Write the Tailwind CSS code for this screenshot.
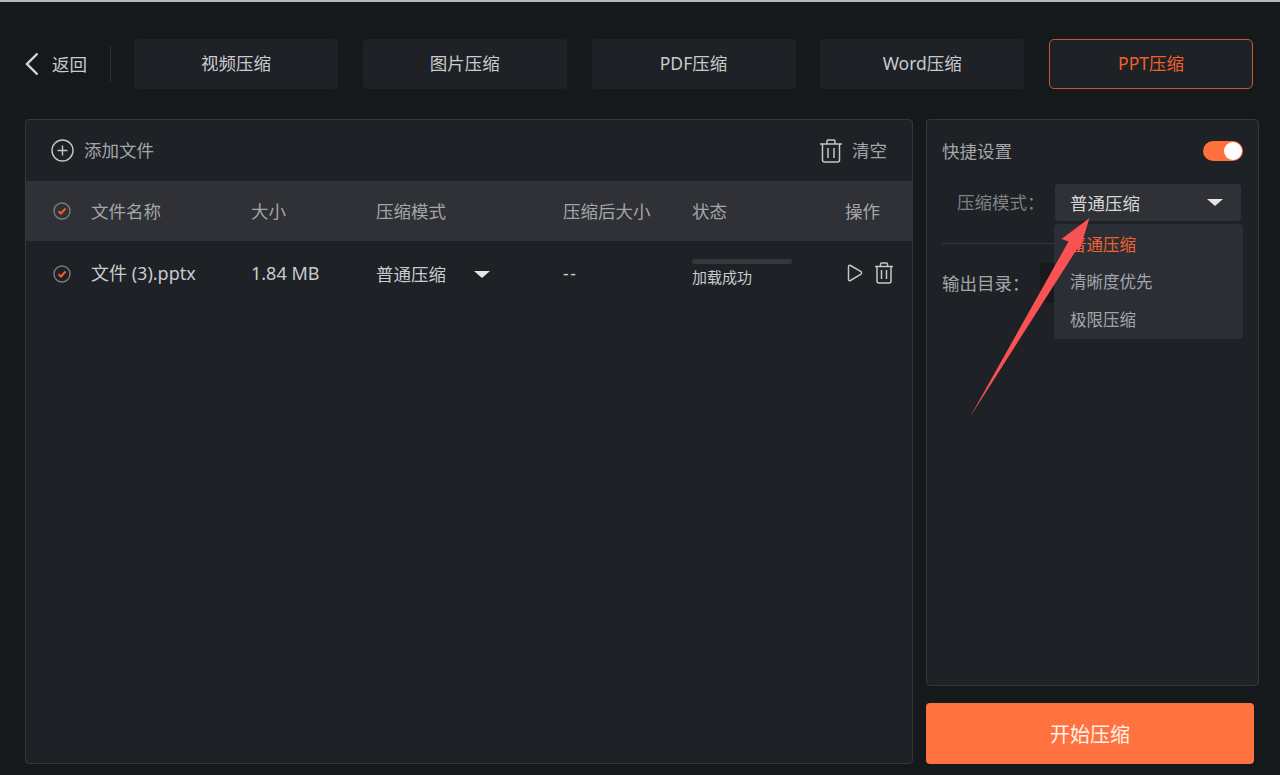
<!DOCTYPE html>
<html lang="zh-CN">
<head>
    <meta charset="UTF-8">
    <meta name="viewport" content="width=device-width, initial-scale=1.0">
    <title>PPT压缩</title>
    <script src="https://cdn.jsdelivr.net/npm/@tailwindcss/browser@4"></script>
</head>

<body class="bg-[#16191c]">
    <div class="relative w-[1280px] h-[775px] overflow-hidden border-t-2 border-[#b9b9b9] font-['Noto_Sans','Noto_Sans_CJK_SC',sans-serif] text-[17.5px] leading-6 text-[#c9cbce]">
        <!-- top tabs -->
        <div class="flex items-center pt-[37px] pl-[25px] h-[87px]">
            <div class="flex items-center w-[86px] h-[36px] border-r border-[#2d3034] mr-[23px]">
                <svg class="w-[14px] h-[24px] mr-[13px]" viewBox="0 0 14 24" fill="none" stroke="#d6d7d9" stroke-width="2.400"><path d="M12.500 1.500 2 12l10.500 10.500"/></svg>
                <span class="-mt-px">返回</span>
            </div>
            <div class="flex gap-[24.75px]">
                <div class="w-[204px] h-[50px] pb-[2px] rounded bg-[#1e2125] flex items-center justify-center">视频压缩</div>
                <div class="w-[204px] h-[50px] pb-[2px] rounded bg-[#1e2125] flex items-center justify-center">图片压缩</div>
                <div class="w-[204px] h-[50px] pb-[2px] rounded bg-[#1e2125] flex items-center justify-center">PDF压缩</div>
                <div class="w-[204px] h-[50px] pb-[2px] rounded bg-[#1e2125] flex items-center justify-center">Word压缩</div>
                <div class="w-[204px] h-[50px] pb-[2px] rounded-[5px] bg-[#1e2125] border border-[#c9582f] text-[#f0602c] flex items-center justify-center">PPT压缩</div>
            </div>
        </div>

        <div class="flex gap-[13px] pl-[25px] pt-[30px]">
            <!-- file list -->
            <div class="w-[888px] h-[645px] rounded border border-[#33363a] bg-[#1e2125]">
                <div class="flex items-center justify-between h-[61px] pl-[25px] pr-[25px]">
                    <div class="flex items-center gap-[10px] text-[#a3a6a9]">
                        <svg class="w-[23px] h-[23px]" viewBox="0 0 23 23" fill="none" stroke="#c4c6c8" stroke-width="1.400"><circle cx="11.500" cy="11.500" r="10.500"/><path d="M11.500 6.500v10M6.500 11.500h10"/></svg>
                        <span class="-mt-[2px]">添加文件</span>
                    </div>
                    <div class="flex items-center gap-[9px] text-[#a3a6a9]">
                        <svg class="w-[24px] h-[24px]" viewBox="0 0 24 24" fill="none" stroke="#c4c6c8" stroke-width="1.500"><path d="M1 5h22M8 5V2a1 1 0 0 1 1-1h6a1 1 0 0 1 1 1v3M3.500 5v16a2 2 0 0 0 2 2h13a2 2 0 0 0 2-2V5M9 9v10M15 9v10"/></svg>
                        <span class="-mt-[2px]">清空</span>
                    </div>
                </div>
                <div class="grid grid-cols-[65px_160px_125px_187px_129px_153px_1fr] items-center h-[60px] bg-[#303136] text-[#a3a6a9]">
                    <div class="pl-[27px]">
                        <svg class="w-[18px] h-[18px]" viewBox="0 0 18 18" fill="none"><circle cx="9" cy="9" r="8" stroke="#7a7b7e" stroke-width="1.400"/><path d="M5.500 9.200 8 11.500l4.500-5" stroke="#f0602c" stroke-width="2"/></svg>
                    </div>
                    <span class="-mt-px">文件名称</span>
                    <span class="-mt-px">大小</span>
                    <span class="-mt-px">压缩模式</span>
                    <span class="-mt-px">压缩后大小</span>
                    <span class="-mt-px">状态</span>
                    <span class="-mt-px">操作</span>
                </div>
                <div class="grid grid-cols-[65px_160px_125px_187px_129px_153px_1fr] items-center h-[66px] text-[#c9cbce]">
                    <div class="pl-[27px]">
                        <svg class="w-[18px] h-[18px]" viewBox="0 0 18 18" fill="none"><circle cx="9" cy="9" r="8" stroke="#7a7b7e" stroke-width="1.400"/><path d="M5.500 9.200 8 11.500l4.500-5" stroke="#f0602c" stroke-width="2"/></svg>
                    </div>
                    <span class="-mt-[2px] text-[18px]">文件 (3).pptx</span>
                    <span class="-mt-[2px] text-[18px]">1.84 MB</span>
                    <div class="flex items-center">
                        <span>普通压缩</span>
                        <span class="ml-[28px] w-0 h-0 border-x-[8px] border-x-transparent border-t-[7px] border-t-[#e4e5e6]"></span>
                    </div>
                    <span class="-mt-[2px] tracking-[1.500px]">--</span>
                    <div class="flex flex-col -mt-[2px]">
                        <div class="w-[100px] h-[5px] rounded-full bg-[#35373c] mb-[2px]"></div>
                        <span class="text-[15px] leading-[22px]">加载成功</span>
                    </div>
                    <div class="flex items-center gap-[11px] pl-[2px] -mt-[2px]">
                        <svg class="w-[16px] h-[18px]" viewBox="0 0 16 18" fill="none" stroke="#c4c6c8" stroke-width="1.500"><path d="M1.500 2.500c0-1 1-1.500 2-1l10.500 6.200c.7.500.7 2 0 2.500L3.500 16.500c-1 .5-2 0-2-1z"/></svg>
                        <svg class="w-[20px] h-[22px]" viewBox="0 0 20 22" fill="none" stroke="#c4c6c8" stroke-width="1.500"><path d="M1 4.500h18M6.500 4.500V2a1 1 0 0 1 1-1h5a1 1 0 0 1 1 1v2.500M3 4.500V19a2 2 0 0 0 2 2h10a2 2 0 0 0 2-2V4.500M7.500 8v9M12.500 8v9"/></svg>
                    </div>
                </div>
            </div>

            <!-- settings column -->
            <div class="w-[333px] flex flex-col">
                <div class="relative w-[333px] h-[567px] rounded border border-[#33363a] bg-[#1e2125] text-[#a3a6a9]">
                    <div class="flex items-center justify-between h-[62px] pl-[15px] pr-[15px]">
                        <span>快捷设置</span>
                        <div class="flex items-center justify-end w-[40px] h-[20px] rounded-full bg-[#ff703d] pr-[1px]">
                            <span class="w-[18px] h-[18px] rounded-full bg-white"></span>
                        </div>
                    </div>
                    <div class="flex items-center h-[37px] mt-[2px]">
                        <span class="ml-[30px] w-[98px] -mt-[2px] text-[#7e8185]">压缩模式：</span>
                        <div class="flex items-center justify-between w-[186px] h-[37px] rounded-sm bg-[#303136] pl-[15px] pr-[18px] text-[#d6d7d9]">
                            <span class="mt-px">普通压缩</span>
                            <span class="w-0 h-0 border-x-[8px] border-x-transparent border-t-[7px] border-t-[#e4e5e6]"></span>
                        </div>
                    </div>
                    <div class="mx-[15px] mt-[22px] border-t border-[#33363a]"></div>
                    <div class="flex items-center mt-[19px] pl-[15px] h-[40px]">
                        <span class="w-[98px]">输出目录：</span>
                        <div class="w-[40px] h-[40px] bg-[#17191c]"></div>
                    </div>
                    <!-- dropdown -->
                    <div class="absolute left-[127px] top-[104px] w-[189px] h-[115px] rounded bg-[#2c2e35] pl-[16px] pt-[2px] text-[16.500px]">
                        <div class="h-[37px] flex items-center text-[#ee6232]">普通压缩</div>
                        <div class="h-[38px] flex items-center">清晰度优先</div>
                        <div class="h-[37px] flex items-center">极限压缩</div>
                    </div>
                </div>
                <div class="w-[328px] h-[61px] mt-[17px] pt-[2px] rounded-sm bg-[#ff723f] text-[#fff0ea] text-[20px] flex items-center justify-center">开始压缩</div>
            </div>
        </div>

        <!-- annotation arrow drawn on top of the screenshot -->
        <svg class="absolute left-[960px] top-[206px] w-[140px] h-[215px]" viewBox="0 0 140 215" fill="#fa5252">
            <polygon points="129.500,10 119,44 117,41 10,209 108.500,33.500 101.500,31"/>
        </svg>
    </div>
</body>
</html>
